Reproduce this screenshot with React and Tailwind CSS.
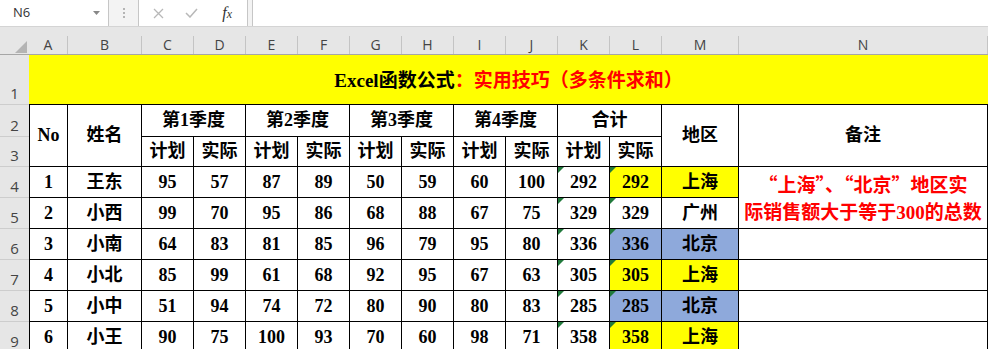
import React from 'react';

const rows = [
  [1, '王东', 95, 57, 87, 89, 50, 59, 60, 100, 292, 292, '上海', 'y'],
  [2, '小西', 99, 70, 95, 86, 68, 88, 67, 75, 329, 329, '广州', ''],
  [3, '小南', 64, 83, 81, 85, 96, 79, 95, 80, 336, 336, '北京', 'b'],
  [4, '小北', 85, 99, 61, 68, 92, 95, 67, 63, 305, 305, '上海', 'y'],
  [5, '小中', 51, 94, 74, 72, 80, 90, 80, 83, 285, 285, '北京', 'b'],
  [6, '小王', 90, 75, 100, 93, 70, 60, 98, 71, 358, 358, '上海', 'y'],
];

const letters = ['A', 'B', 'C', 'D', 'E', 'F', 'G', 'H', 'I', 'J', 'K', 'L', 'M', 'N'];
const rowNums = [1, 2, 3, 4, 5, 6, 7, 8, 9];

const cell = 'relative flex items-center justify-center border-r border-b border-black';

function Flag() {
  return (
    <svg className="absolute left-0 top-0" width="6" height="6">
      <polygon points="0,0 6,0 0,6" fill="#217a3c" />
    </svg>
  );
}

function fill(hl) {
  if (hl === 'y') return 'bg-[#ffff00]';
  if (hl === 'b') return 'bg-[#8ea9db]';
  return 'bg-white';
}

export default function App() {
  return (
    <div className="w-[988px] h-[349px] overflow-hidden bg-white">
      {/* formula bar */}
      <div className="flex h-[27px] bg-[#f3f3f3] border-b border-[#d4d4d4] font-['Open_Sans','Noto_Sans',sans-serif]">
        <div className="w-[109px] bg-white border-r border-[#c6c6c6] flex items-center justify-between pl-[13px] pr-[8px]">
          <span className="text-[13px] text-[#333]">N6</span>
          <svg width="7" height="4">
            <polygon points="0,0 7,0 3.5,4" fill="#888" />
          </svg>
        </div>
        <div className="w-[29px] flex flex-col items-center justify-center gap-[2px]">
          <span className="w-[2px] h-[2px] bg-[#b4b4b4]" />
          <span className="w-[2px] h-[2px] bg-[#b4b4b4]" />
          <span className="w-[2px] h-[2px] bg-[#b4b4b4]" />
        </div>
        <div className="w-[110px] bg-white border-x border-[#c6c6c6] flex items-center pl-[3px]">
          <span className="w-[33px] flex justify-center">
            <svg width="11" height="11">
              <path d="M1 1 L10 10 M10 1 L1 10" stroke="#b8b8b8" strokeWidth="1.3" />
            </svg>
          </span>
          <span className="w-[33px] flex justify-center">
            <svg width="13" height="10">
              <path d="M1 5 L5 9 L12 1" stroke="#b8b8b8" strokeWidth="1.5" fill="none" />
            </svg>
          </span>
          <span className="w-[40px] flex justify-center font-['Liberation_Serif',serif] italic text-[16px] text-[#333]">
            f<span className="text-[12px] mt-[4px]">x</span>
          </span>
        </div>
        <div className="w-[4px]" />
        <div className="flex-1 bg-white border-l border-[#c6c6c6]" />
      </div>

      {/* column headers */}
      <div className="flex h-[28px] bg-[#e6e6e6] border-b border-[#a6a6a6] items-end font-['Open_Sans','Noto_Sans',sans-serif]">
        <div className="w-[29px] h-[18px] flex items-end justify-end pr-[2px] pb-[1px]">
          <svg width="12" height="12">
            <polygon points="12,0 12,12 0,12" fill="#b4b4b4" />
          </svg>
        </div>
        <div className="flex-1 grid grid-cols-[39px_74px_repeat(10,52px)_77px_1fr] h-[18px]">
          {letters.map((l) => (
            <div key={l} className="flex items-center justify-center text-[14px] leading-none text-[#444] border-r border-[#c4c4c4]">
              {l}
            </div>
          ))}
        </div>
      </div>

      <div className="flex">
        {/* row headers */}
        <div className="w-[29px] grid grid-rows-[50px_32px_30px_repeat(6,31px)] bg-[#e6e6e6] font-['Open_Sans','Noto_Sans',sans-serif]">
          {rowNums.map((n) => (
            <div key={n} className="flex items-end justify-center pb-[1px] text-[15px] leading-[20px] text-[#444] border-b border-[#cdcdcd]">
              {n}
            </div>
          ))}
        </div>

        {/* sheet */}
        <div className="flex-1 grid grid-cols-[39px_74px_repeat(10,52px)_77px_1fr] grid-rows-[50px_32px_30px_repeat(6,31px)] font-['Liberation_Serif','Noto_Sans_CJK_SC',serif] font-bold text-[18px] text-black">
          <div className="col-span-14 bg-[#ffff00] border-b border-black flex items-center justify-center pt-[3px] text-[19px]">
            <span>Excel函数公式<span className="text-[#ff0000]">：实用技巧（多条件求和）</span></span>
          </div>

          <div className={`${cell} row-span-2 border-l`}>No</div>
          <div className={`${cell} row-span-2`}>姓名</div>
          <div className={`${cell} col-span-2`}>第1季度</div>
          <div className={`${cell} col-span-2`}>第2季度</div>
          <div className={`${cell} col-span-2`}>第3季度</div>
          <div className={`${cell} col-span-2`}>第4季度</div>
          <div className={`${cell} col-span-2`}>合计</div>
          <div className={`${cell} row-span-2`}>地区</div>
          <div className={`${cell} row-span-2`}>备注</div>
          {[0, 1, 2, 3, 4].map((i) => (
            <React.Fragment key={i}>
              <div className={cell}>计划</div>
              <div className={cell}>实际</div>
            </React.Fragment>
          ))}

          {rows.map((r, ri) => (
            <React.Fragment key={ri}>
              <div className={`${cell} border-l`}>{r[0]}</div>
              <div className={cell}>{r[1]}</div>
              {r.slice(2, 10).map((v, i) => (
                <div key={i} className={cell}>{v}</div>
              ))}
              <div className={cell}>
                <Flag />
                {r[10]}
              </div>
              <div className={`${cell} ${fill(r[13])}`}>
                <Flag />
                {r[11]}
              </div>
              <div className={`${cell} ${fill(r[13])}`}>{r[12]}</div>
              {ri === 0 && (
                <div className={`${cell} row-span-2 text-[#ff0000] text-[19px] leading-[27px] text-center font-['Noto_Sans_CJK_SC',sans-serif]`}>
                  <span>
                    “上海”、“北京”地区实
                    <br />
                    际销售额大于等于<span className="font-['Liberation_Serif',serif]">300</span>的总数
                  </span>
                </div>
              )}
              {ri > 1 && <div className={cell} />}
            </React.Fragment>
          ))}
        </div>
      </div>
    </div>
  );
}
